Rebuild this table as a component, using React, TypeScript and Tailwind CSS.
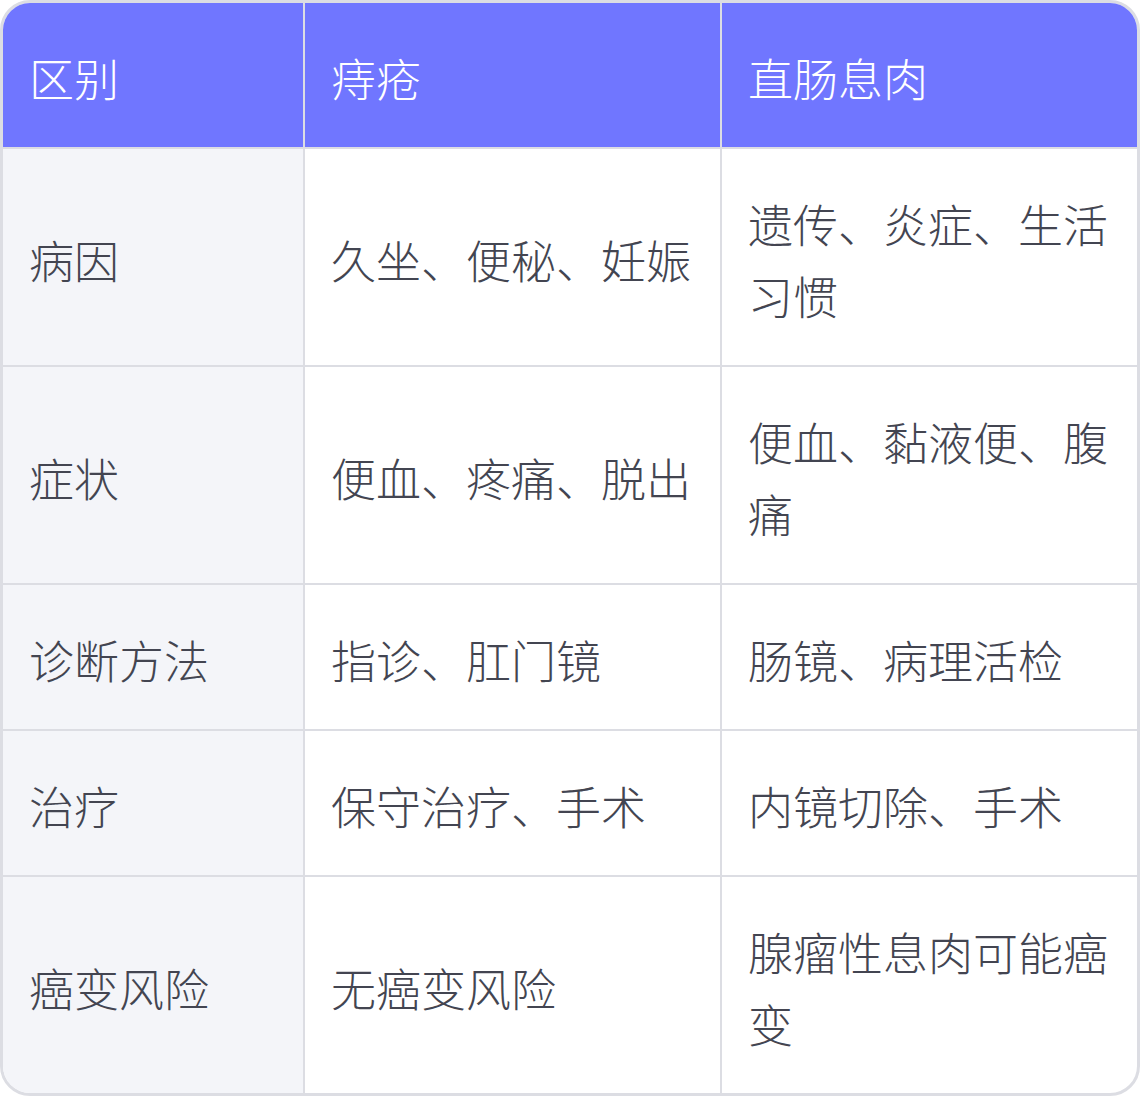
import React from "react"

const rows: [string, string, string][] = [
  ["病因", "久坐、便秘、妊娠", "遗传、炎症、生活习惯"],
  ["症状", "便血、疼痛、脱出", "便血、黏液便、腹痛"],
  ["诊断方法", "指诊、肛门镜", "肠镜、病理活检"],
  ["治疗", "保守治疗、手术", "内镜切除、手术"],
  ["癌变风险", "无癌变风险", "腺瘤性息肉可能癌变"],
]

const cell = "pl-[26px] pr-[20px] pt-[39px] pb-[33px] flex items-center"

export default function App() {
  return (
    <div
      className="w-[1140px] bg-white text-[45px] leading-[72px] font-light text-[#434551]"
      style={{ fontFamily: '"Noto Sans CJK SC", "Noto Sans", sans-serif' }}
    >
      <div className="rounded-[30px] border-[3px] border-[#dcdde3] overflow-hidden">
        <div className="grid grid-cols-[302px_417px_415px] bg-[#7076ff] text-white border-b-2 border-[#dcdde3]">
          <div className={cell + " border-r-2 border-[#dcdde3]"}>区别</div>
          <div className={cell + " border-r-2 border-[#dcdde3]"}>痔疮</div>
          <div className={cell}>直肠息肉</div>
        </div>
        {rows.map((r, i) => (
          <div
            key={r[0]}
            className={
              "grid grid-cols-[302px_417px_415px] " +
              (i < rows.length - 1 ? "border-b-2 border-[#dcdde3]" : "")
            }
          >
            <div className={cell + " bg-[#f4f5f9] border-r-2 border-[#dcdde3]"}>{r[0]}</div>
            <div className={cell + " border-r-2 border-[#dcdde3]"}>{r[1]}</div>
            <div className={cell}>{r[2]}</div>
          </div>
        ))}
      </div>
    </div>
  )
}
